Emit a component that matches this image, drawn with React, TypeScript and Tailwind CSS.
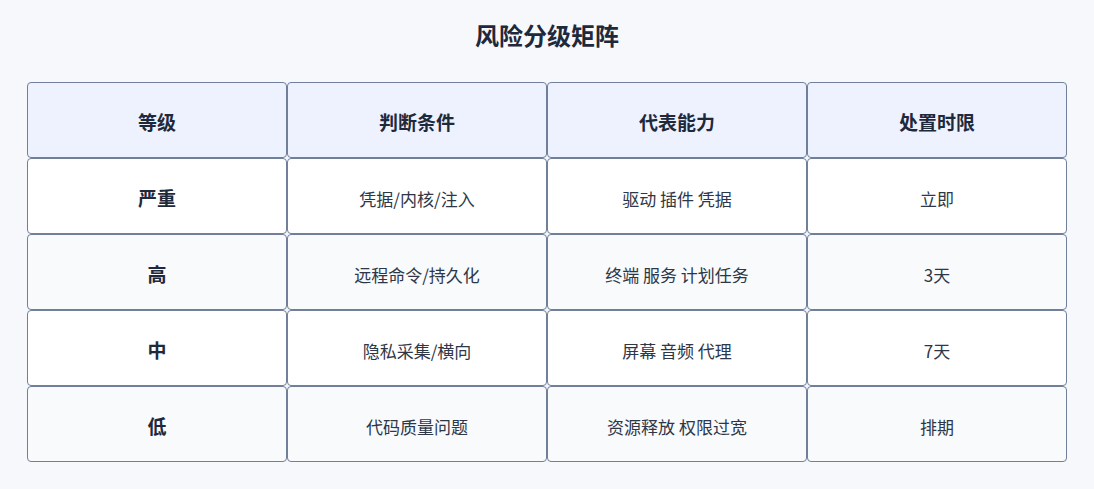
import React from 'react';

const font = { fontFamily: '"Noto Sans CJK SC", "Noto Sans", sans-serif' };

const header = ['等级', '判断条件', '代表能力', '处置时限'];

const rows = [
  ['严重', '凭据/内核/注入', '驱动 插件 凭据', '立即'],
  ['高', '远程命令/持久化', '终端 服务 计划任务', '3天'],
  ['中', '隐私采集/横向', '屏幕 音频 代理', '7天'],
  ['低', '代码质量问题', '资源释放 权限过宽', '排期'],
];

const App: React.FC = () => {
  return (
    <div className="min-h-screen bg-[#f7f8fc] px-[27px] pt-[19px] pb-[27px]" style={font}>
      <h1 className="mb-[31px] text-center text-[24px] font-bold leading-[32px] text-[#1e293b]">
        风险分级矩阵
      </h1>
      <div className="grid grid-cols-4">
        {header.map((h) => (
          <div
            key={h}
            className="flex h-[76px] items-center justify-center rounded-[4px] border border-[#71809a] bg-[#eef2ff] pt-[5px] text-[19px] font-bold text-[#1e293b]"
          >
            {h}
          </div>
        ))}
        {rows.map((row, i) =>
          row.map((cell, j) => (
            <div
              key={`${i}-${j}`}
              className={`flex h-[76px] items-center justify-center rounded-[4px] border border-[#71809a] pt-[5px] ${
                i % 2 === 0 ? 'bg-white' : 'bg-[#f8fafc]'
              } ${j === 0 ? 'text-[19px] font-bold text-[#1e293b]' : 'text-[17px] text-[#2d3748]'}`}
            >
              {cell}
            </div>
          ))
        )}
      </div>
    </div>
  );
};

export default App;
